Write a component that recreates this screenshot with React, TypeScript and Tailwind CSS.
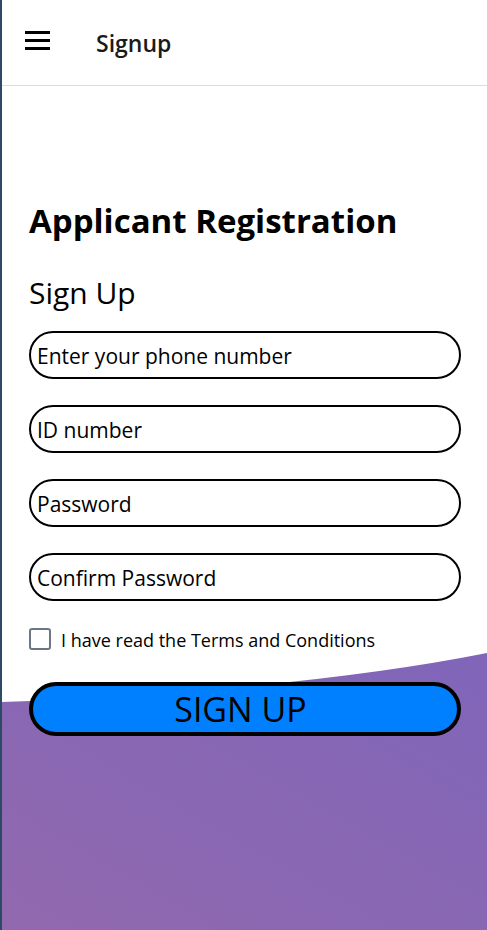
import React from "react";

export default function App() {
  const fields = ["Enter your phone number", "ID number", "Password", "Confirm Password"];
  return (
    <div
      className="relative min-h-[930px] w-full overflow-hidden bg-white border-l-2 border-[#2c4a66]"
      style={{ fontFamily: '"Open Sans", "Noto Sans", sans-serif' }}
    >
      <svg
        className="absolute left-0 top-[650px] h-[280px] w-full"
        viewBox="0 0 487 280"
        preserveAspectRatio="none"
      >
        <defs>
          <linearGradient id="wg" x1="0" y1="1" x2="1" y2="0">
            <stop offset="0" stopColor="#9169ae" />
            <stop offset="1" stopColor="#8065b9" />
          </linearGradient>
        </defs>
        <path d="M0 52 Q 300 40 487 3 L487 280 L0 280 Z" fill="url(#wg)" />
      </svg>

      <header className="relative z-10 flex h-[86px] items-center border-b border-[#dcdcdc] pl-[23px]">
        <div className="flex w-[25px] flex-col gap-[5px] -mt-[4px]">
          <span className="block h-[3px] w-full bg-black" />
          <span className="block h-[3px] w-full bg-black" />
          <span className="block h-[3px] w-full bg-black" />
        </div>
        <span className="ml-[46px] mt-[2px] text-[23px] font-semibold text-[#1a1a1a]">Signup</span>
      </header>

      <main className="relative z-10 pl-[27px] pr-[26px] pt-[115px]">
        <h1 className="text-[33px] font-bold leading-[40px] text-black">Applicant Registration</h1>
        <h2 className="mt-[33px] text-[30px] leading-[38px] text-black">Sign Up</h2>
        <div className="mt-[19px] flex flex-col gap-[26px]">
          {fields.map((f) => (
            <div
              key={f}
              className="flex h-[48px] items-center rounded-full border-2 border-black px-[6px] pt-[4px] text-[21px] text-black"
            >
              {f}
            </div>
          ))}
        </div>
        <label className="mt-[22px] flex items-center">
          <span className="block h-[22px] w-[22px] rounded-[3px] border-2 border-[#6b7787] bg-white" />
          <span className="ml-[10px] pt-[4px] text-[18px] leading-[27px] text-black">I have read the Terms and Conditions</span>
        </label>
        <button className="mt-[28px] flex h-[54px] w-full items-center justify-center rounded-full border-4 border-black bg-[#0080ff] pr-[9px] text-[34px] text-black">
          SIGN UP
        </button>
      </main>
    </div>
  );
}
